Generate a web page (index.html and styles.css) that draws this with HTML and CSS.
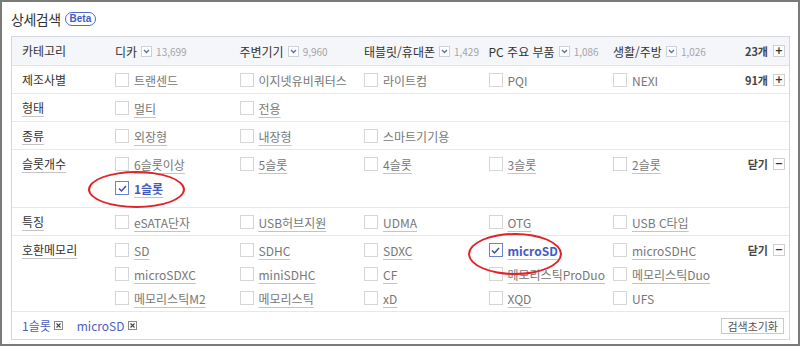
FILE: index.html
```html
<!DOCTYPE html>
<html lang="ko">
<head>
<meta charset="UTF-8">
<title>상세검색</title>
<link rel="stylesheet" href="styles.css">
</head>
<body>
<div class="frame">
  <div class="title-bar">
    <h2 class="title">상세검색</h2>
    <span class="beta">Beta</span>
  </div>

  <div class="filter">
    <div class="row head">
      <div class="cat">카테고리</div>
      <div class="opts">
        <div class="hcol">디카 <span class="dd"><svg width="9" height="9" viewBox="0 0 9 9"><polyline points="2,3 4.5,5.5 7,3" fill="none" stroke="#5b6fae" stroke-width="1.3"/></svg></span><span class="cnt">13,699</span></div>
        <div class="hcol">주변기기 <span class="dd"><svg width="9" height="9" viewBox="0 0 9 9"><polyline points="2,3 4.5,5.5 7,3" fill="none" stroke="#5b6fae" stroke-width="1.3"/></svg></span><span class="cnt">9,960</span></div>
        <div class="hcol">태블릿/휴대폰 <span class="dd"><svg width="9" height="9" viewBox="0 0 9 9"><polyline points="2,3 4.5,5.5 7,3" fill="none" stroke="#5b6fae" stroke-width="1.3"/></svg></span><span class="cnt">1,429</span></div>
        <div class="hcol">PC 주요 부품 <span class="dd"><svg width="9" height="9" viewBox="0 0 9 9"><polyline points="2,3 4.5,5.5 7,3" fill="none" stroke="#5b6fae" stroke-width="1.3"/></svg></span><span class="cnt">1,086</span></div>
        <div class="hcol">생활/주방 <span class="dd"><svg width="9" height="9" viewBox="0 0 9 9"><polyline points="2,3 4.5,5.5 7,3" fill="none" stroke="#5b6fae" stroke-width="1.3"/></svg></span><span class="cnt">1,026</span></div>
      </div>
      <div class="act">23개 <span class="pm">+</span></div>
    </div>

    <div class="row">
      <div class="cat">제조사별</div>
      <div class="opts">
        <label class="opt"><span class="box"></span>트랜센드</label>
        <label class="opt"><span class="box"></span>이지넷유비쿼터스</label>
        <label class="opt"><span class="box"></span>라이트컴</label>
        <label class="opt"><span class="box"></span>PQI</label>
        <label class="opt"><span class="box"></span>NEXI</label>
      </div>
      <div class="act">91개 <span class="pm">+</span></div>
    </div>

    <div class="row">
      <div class="cat u">형태</div>
      <div class="opts">
        <label class="opt"><span class="box"></span><span class="u">멀티</span></label>
        <label class="opt"><span class="box"></span><span class="u">전용</span></label>
      </div>
      <div class="act"></div>
    </div>

    <div class="row">
      <div class="cat u">종류</div>
      <div class="opts">
        <label class="opt"><span class="box"></span><span class="u">외장형</span></label>
        <label class="opt"><span class="box"></span><span class="u">내장형</span></label>
        <label class="opt"><span class="box"></span>스마트기기용</label>
      </div>
      <div class="act"></div>
    </div>

    <div class="row tall">
      <div class="cat u">슬롯개수</div>
      <div class="opts">
        <label class="opt"><span class="box"></span><span class="u">6슬롯이상</span></label>
        <label class="opt"><span class="box"></span><span class="u">5슬롯</span></label>
        <label class="opt"><span class="box"></span><span class="u">4슬롯</span></label>
        <label class="opt"><span class="box"></span><span class="u">3슬롯</span></label>
        <label class="opt"><span class="box"></span><span class="u">2슬롯</span></label>
        <label class="opt on"><span class="box"><svg width="11" height="11" viewBox="0 0 11 11"><polyline points="2,5.5 4.5,8 9,3" fill="none" stroke="#3e4f99" stroke-width="1.5"/></svg></span><span class="u">1슬롯</span></label>
      </div>
      <div class="act">닫기 <span class="pm">−</span></div>
    </div>

    <div class="row">
      <div class="cat u">특징</div>
      <div class="opts">
        <label class="opt"><span class="box"></span><span class="u">eSATA단자</span></label>
        <label class="opt"><span class="box"></span><span class="u">USB허브지원</span></label>
        <label class="opt"><span class="box"></span><span class="u">UDMA</span></label>
        <label class="opt"><span class="box"></span><span class="u">OTG</span></label>
        <label class="opt"><span class="box"></span><span class="u">USB C타입</span></label>
      </div>
      <div class="act"></div>
    </div>

    <div class="row">
      <div class="cat u">호환메모리</div>
      <div class="opts">
        <label class="opt"><span class="box"></span><span class="u">SD</span></label>
        <label class="opt"><span class="box"></span><span class="u">SDHC</span></label>
        <label class="opt"><span class="box"></span><span class="u">SDXC</span></label>
        <label class="opt on"><span class="box"><svg width="11" height="11" viewBox="0 0 11 11"><polyline points="2,5.5 4.5,8 9,3" fill="none" stroke="#3e4f99" stroke-width="1.5"/></svg></span><span class="u">microSD</span></label>
        <label class="opt"><span class="box"></span><span class="u">microSDHC</span></label>
        <label class="opt"><span class="box"></span><span class="u">microSDXC</span></label>
        <label class="opt"><span class="box"></span><span class="u">miniSDHC</span></label>
        <label class="opt"><span class="box"></span><span class="u">CF</span></label>
        <label class="opt"><span class="box"></span><span class="u">메모리스틱ProDuo</span></label>
        <label class="opt"><span class="box"></span><span class="u">메모리스틱Duo</span></label>
        <label class="opt"><span class="box"></span><span class="u">메모리스틱M2</span></label>
        <label class="opt"><span class="box"></span><span class="u">메모리스틱</span></label>
        <label class="opt"><span class="box"></span><span class="u">xD</span></label>
        <label class="opt"><span class="box"></span><span class="u">XQD</span></label>
        <label class="opt"><span class="box"></span>UFS</label>
      </div>
      <div class="act">닫기 <span class="pm">−</span></div>
    </div>

    <div class="foot">
      <div class="tags">
        <span class="tag">1슬롯 <span class="x"><svg width="7" height="7" viewBox="0 0 7 7"><path d="M1.5 1.5 L5.5 5.5 M5.5 1.5 L1.5 5.5" stroke="#444" stroke-width="1.1"/></svg></span></span>
        <span class="tag">microSD <span class="x"><svg width="7" height="7" viewBox="0 0 7 7"><path d="M1.5 1.5 L5.5 5.5 M5.5 1.5 L1.5 5.5" stroke="#444" stroke-width="1.1"/></svg></span></span>
      </div>
      <button class="reset">검색초기화</button>
    </div>
  </div>

  <span class="mark mark-slot"></span>
  <span class="mark mark-sd"></span>
</div>
</body>
</html>
```

FILE: styles.css
```css
body {
  margin: 0;
  background-color: #fff;
  font-family: "Noto Sans CJK KR", "Noto Sans", sans-serif;
  font-size: 12px;
  color: #333;
}

.frame {
  position: relative;
  width: 800px;
  height: 346px;
  box-sizing: border-box;
  border: 2px solid #7a7a7a;
  padding: 0 8px 0 9px;
}

.title-bar {
  display: flex;
  align-items: center;
  height: 34px;
}

.title {
  margin: 0;
  font-size: 14px;
  font-weight: normal;
  color: #333;
  letter-spacing: -0.5px;
}

.beta {
  display: inline-block;
  margin-left: 4px;
  padding: 0 4px;
  height: 12px;
  line-height: 11px;
  border: 1px solid #4d6bd1;
  border-radius: 8px;
  color: #3e5bc7;
  font-family: "Liberation Sans", Arial, sans-serif;
  font-size: 10px;
  font-weight: bold;
}

.filter {
  border: 1px solid #d4d8de;
}

.row {
  display: grid;
  grid-template-columns: 103px 622.5px 1fr;
  border-bottom: 1px solid #e8e8e8;
  padding: 7px 0 6px;
}

.row.head {
  background-color: #f4f6fa;
  border-bottom-color: #dfe3ea;
  padding: 0;
  height: 28px;
  align-items: center;
}

.row.tall {
  padding-bottom: 12px;
}

.cat {
  padding-left: 10px;
  line-height: 14px;
  color: #333;
  justify-self: start;
  margin-left: 10px;
  padding-left: 0;
}

.opts {
  display: grid;
  grid-template-columns: repeat(5, 124.5px);
  row-gap: 10px;
}

.hcol {
  display: flex;
  align-items: center;
  color: #333;
}

.dd {
  display: inline-flex;
  align-items: center;
  justify-content: center;
  width: 9px;
  height: 9px;
  margin: 0 4px 0 4px;
  border: 1px solid #cdd2da;
  background-color: #fff;
}

.cnt {
  font-size: 10px;
  color: #a5a5a5;
}

.opt {
  display: flex;
  align-items: center;
  height: 14px;
  color: #777;
  white-space: nowrap;
}

.box {
  display: inline-flex;
  align-items: center;
  justify-content: center;
  width: 12px;
  height: 12px;
  margin-right: 5px;
  border: 1px solid #d6d6d6;
  background-color: #fff;
  flex-shrink: 0;
}

.u {
  text-decoration: underline;
  text-decoration-color: #c4c4c4;
  text-underline-offset: 3px;
}

.opt.on {
  color: #3f5bc0;
  font-weight: bold;
}

.opt.on .box {
  border-color: #6d82c8;
}

.act {
  display: flex;
  justify-content: flex-end;
  align-items: flex-start;
  padding-right: 4px;
  font-size: 11px;
  font-weight: bold;
  color: #444;
  line-height: 14px;
}

.head .act {
  align-items: center;
}

.pm {
  display: inline-flex;
  align-items: center;
  justify-content: center;
  width: 10px;
  height: 10px;
  margin-left: 5px;
  margin-top: 1px;
  border: 1px solid #d0d0d0;
  font-family: "DejaVu Sans", sans-serif;
  font-size: 10px;
  line-height: 10px;
  color: #333;
  background-color: #fff;
}

.head .pm {
  margin-top: 0;
}

.foot {
  display: flex;
  justify-content: space-between;
  align-items: center;
  height: 27px;
  padding: 0 5px 0 10px;
}

.tags {
  display: flex;
  gap: 14px;
}

.tag {
  display: flex;
  align-items: center;
  color: #4d60bc;
}

.x {
  display: inline-flex;
  align-items: center;
  justify-content: center;
  width: 7px;
  height: 7px;
  margin-left: 3px;
  border: 1px solid #888;
}

.reset {
  height: 16px;
  padding: 0 5px;
  border: 1px solid #c9c9c9;
  background-color: #fff;
  font-family: "Noto Sans CJK KR", sans-serif;
  font-size: 11px;
  line-height: 14px;
  color: #555;
}

.mark {
  position: absolute;
  border: 2px solid #e0232a;
  border-radius: 50%;
  box-sizing: border-box;
}

.mark-slot {
  left: 86px;
  top: 169px;
  width: 97px;
  height: 37px;
}

.mark-sd {
  left: 466px;
  top: 231px;
  width: 94px;
  height: 42px;
}
```
